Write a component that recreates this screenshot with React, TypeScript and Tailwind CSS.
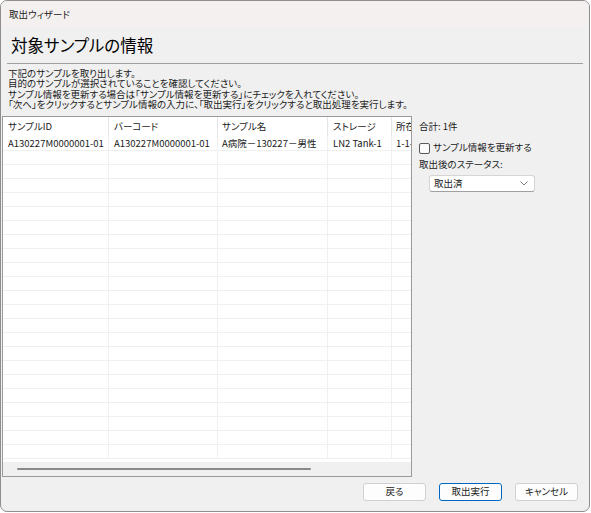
import React from "react";

const font = "font-['Noto_Sans_CJK_JP','Noto_Sans',sans-serif] [font-feature-settings:'palt']";

const cols = [
  { w: "w-[106px]", pl: "pl-[5px]" },
  { w: "w-[109px]", pl: "pl-[5px]" },
  { w: "w-[110px]", pl: "pl-[4px]" },
  { w: "w-[64px]", pl: "pl-[5px]" },
  { w: "w-[60px]", pl: "pl-[4px]" },
];

const headers = ["サンプルID", "バーコード", "サンプル名", "ストレージ", "所在"];
const row = ["A130227M0000001-01", "A130227M0000001-01", "A病院－130227－男性", "LN2 Tank-1", "1-1-1"];

function Row({ cells, header }: { cells: string[]; header?: boolean }) {
  return (
    <div className={`flex shrink-0 ${header ? "h-[20px]" : "h-[14px] border-b border-[#f0f0f0]"}`}>
      {cols.map((c, i) => (
        <div
          key={i}
          className={`${c.w} ${c.pl} shrink-0 overflow-hidden whitespace-nowrap flex items-center text-[9.5px] leading-none text-[#1a1a1a] ${
            i < 4 ? (header ? "border-r border-[#e5e5e5]" : "border-r border-[#f0f0f0]") : ""
          }`}
        >
          {cells[i]}
        </div>
      ))}
    </div>
  );
}

export default function App() {
  const empties = Array.from({ length: 22 });
  return (
    <div className={`w-[591px] h-[513px] bg-white ${font}`}>
      <div className="w-[590px] h-[512px] rounded-[7px] border border-[#8e8e8e] bg-[#f0f0f0] flex flex-col overflow-hidden">
        <div className="h-[26px] shrink-0 bg-[#f4f0f0] flex items-center pl-[8px] text-[9.5px] text-[#1a1a1a]">
          取出ウィザード
        </div>
        <div className="h-[36px] shrink-0 flex items-center pl-[10px] text-[16.5px] text-black leading-none">
          対象サンプルの情報
        </div>
        <div className="mx-[6px] h-px bg-[#a0a0a0] shrink-0" />
        <div className="pl-[7px] pt-[4px] text-[9.5px] leading-[10.3px] text-[#1a1a1a] whitespace-nowrap shrink-0">
          <div>下記のサンプルを取り出します。</div>
          <div>目的のサンプルが選択されていることを確認してください。</div>
          <div>サンプル情報を更新する場合は「サンプル情報を更新する」にチェックを入れてください。</div>
          <div>「次へ」をクリックするとサンプル情報の入力に、「取出実行」をクリックすると取出処理を実行します。</div>
        </div>
        <div className="flex mt-[7px] shrink-0">
          <div className="ml-[1px] w-[410px] h-[361px] border border-[#9a9a9a] bg-white flex flex-col overflow-hidden">
            <Row cells={headers} header />
            <Row cells={row} />
            <div className="flex-1 overflow-hidden flex flex-col">
              {empties.map((_, i) => (
                <Row key={i} cells={["", "", "", "", ""]} />
              ))}
            </div>
            <div className="h-[14px] shrink-0 bg-[#f0f0f0] flex items-center pl-[14px]">
              <div className="w-[294px] h-[2px] rounded-full bg-[#8a8a8a]" />
            </div>
          </div>
          <div className="pl-[7px] pt-[4px] flex flex-col text-[9.5px] text-[#1a1a1a] leading-none">
            <div className="h-[14px] flex items-center">合計: 1件</div>
            <div className="h-[14px] flex items-center gap-[3px] mt-[7px]">
              <div className="w-[11px] h-[11px] rounded-[2px] border border-[#5a5a5a] bg-[#fbfbfb]" />
              <span>サンプル情報を更新する</span>
            </div>
            <div className="h-[14px] flex items-center mt-[3px]">取出後のステータス:</div>
            <div className="ml-[10px] mt-[3px] w-[106px] h-[17px] rounded-[3px] border border-[#d5d5d5] border-b-[#a0a0a0] bg-white flex items-center justify-between pl-[4px] pr-[6px]">
              <span>取出済</span>
              <svg width="8" height="5" viewBox="0 0 8 5" fill="none">
                <path d="M0.5 0.5L4 4L7.5 0.5" stroke="#707070" strokeWidth="0.9" />
              </svg>
            </div>
          </div>
        </div>
        <div className="flex justify-end gap-[13px] pr-[11px] mt-[6px] shrink-0 text-[9.5px] text-[#1a1a1a]">
          <button className="w-[63px] h-[18px] rounded-[3px] border border-[#d0d0d0] bg-[#fdfdfd] flex items-center justify-center leading-none">
            戻る
          </button>
          <button className="w-[63px] h-[18px] rounded-[3px] border border-[#0067c0] bg-[#fdfdfd] flex items-center justify-center leading-none">
            取出実行
          </button>
          <button className="w-[63px] h-[18px] rounded-[3px] border border-[#d0d0d0] bg-[#fdfdfd] flex items-center justify-center leading-none">
            キャンセル
          </button>
        </div>
      </div>
    </div>
  );
}
